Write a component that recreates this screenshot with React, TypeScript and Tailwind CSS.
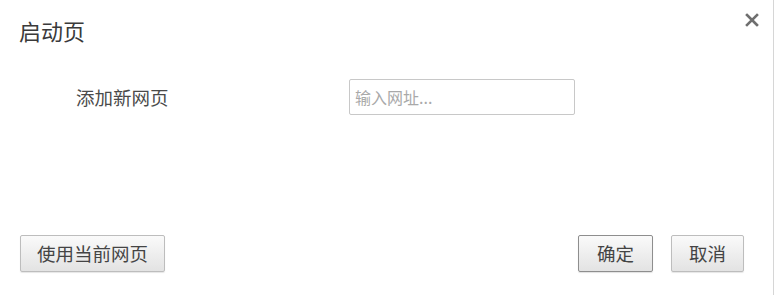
export default function App() {
  return (
    <div className="w-[777px] h-[295px] bg-white flex font-['Noto_Sans_CJK_SC','Noto_Sans',sans-serif]">
      <div className="w-[774px] h-full border-r border-[#d6d6d6] flex flex-col">
        {/* Header */}
        <div className="h-[60px] flex justify-between pl-[19px] pr-[14px]">
          <h1 className="mt-[15px] text-[22px] leading-[30px] text-[#3a3a3a]">启动页</h1>
          <button className="mt-[13px] w-[14px] h-[14px] flex items-center justify-center" aria-label="关闭">
            <svg viewBox="0 0 14 14" className="w-[14px] h-[14px]">
              <path d="M2 2 L12 12 M12 2 L2 12" stroke="#6f6f6f" strokeWidth="2.6" strokeLinecap="square" />
            </svg>
          </button>
        </div>

        {/* Add page row */}
        <div className="mt-[19px] h-[36px] flex items-center">
          <span className="ml-[76px] w-[273px] text-[18.5px] leading-[24px] text-[#4a4a4a]">添加新网页</span>
          <input
            className="w-[226px] h-[36px] border border-[#c8c8c8] rounded-[2px] px-[5px] text-[16px] text-[#333] outline-none placeholder:text-[#a9a9a9]"
            placeholder="输入网址..."
          />
        </div>

        <div className="flex-1" />

        {/* Footer */}
        <div className="flex items-center pl-[20px] pr-[29px] pb-[23px]">
          <button className="w-[145px] h-[37px] rounded-[2px] border border-[#bdbdbd] bg-linear-to-b from-[#fafafa] to-[#e3e3e3] shadow-[0_1px_1px_rgba(0,0,0,0.1)] text-[18.5px] text-[#444]">
            使用当前网页
          </button>
          <div className="flex-1" />
          <button className="w-[75px] h-[37px] rounded-[2px] border border-[#8e8e8e] bg-linear-to-b from-[#fafafa] to-[#e3e3e3] shadow-[0_1px_1px_rgba(0,0,0,0.12)] text-[18.5px] text-[#444]">
            确定
          </button>
          <button className="ml-[18px] w-[73px] h-[37px] rounded-[2px] border border-[#bdbdbd] bg-linear-to-b from-[#fafafa] to-[#e3e3e3] shadow-[0_1px_1px_rgba(0,0,0,0.1)] text-[18.5px] text-[#444]">
            取消
          </button>
        </div>
      </div>
    </div>
  );
}
